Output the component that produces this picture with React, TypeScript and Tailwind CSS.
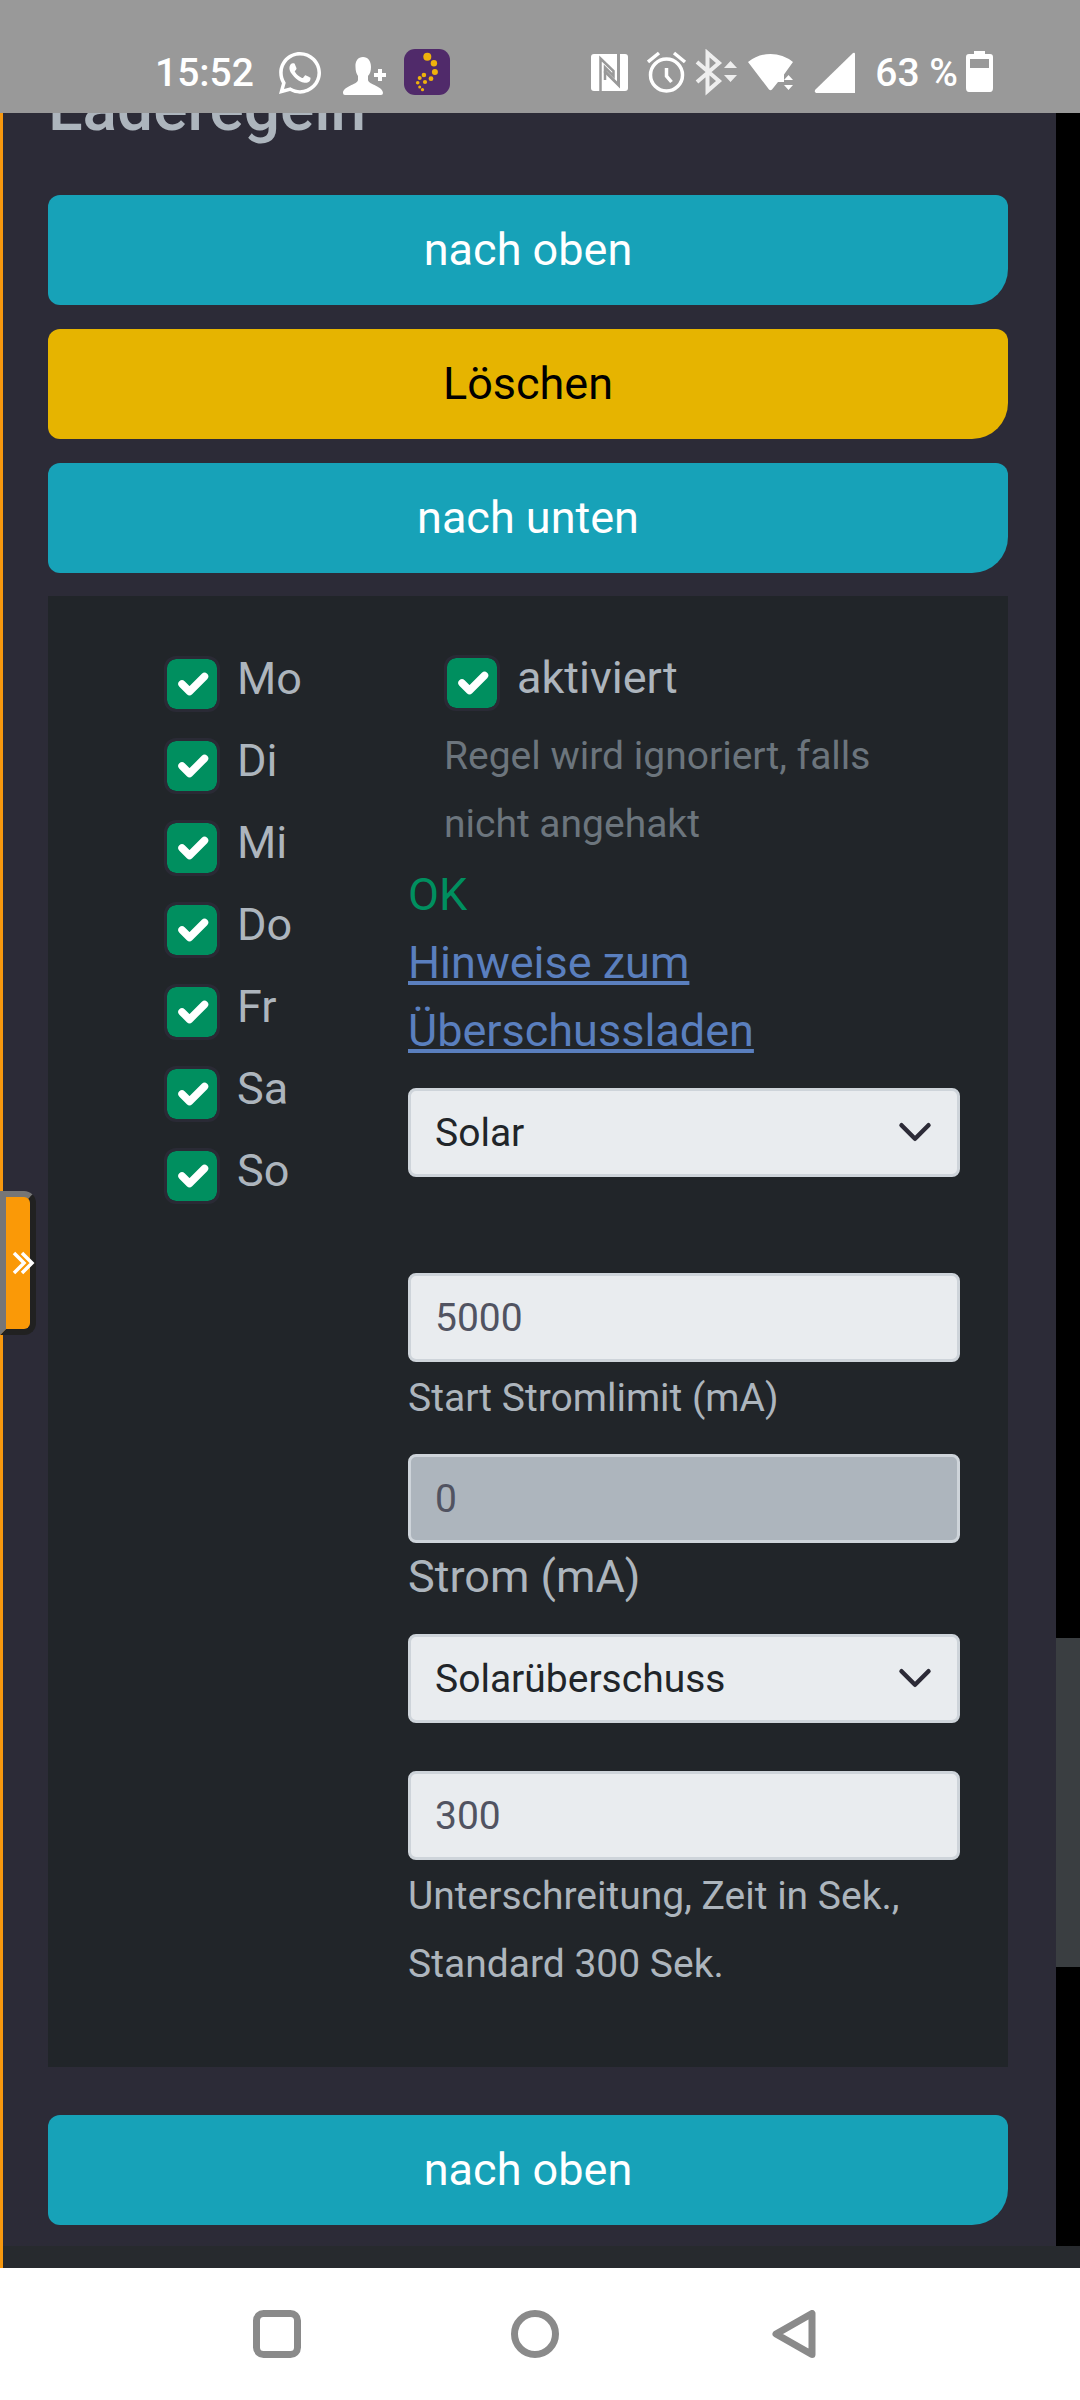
import { useState } from "react";
import { FaWhatsapp } from "react-icons/fa";

const DAYS = ["Mo", "Di", "Mi", "Do", "Fr", "Sa", "So"];

function StatusBar() {
  return (
    <header className="flex items-center justify-between bg-[#999999] pt-[49px] pb-4 pl-[155px] pr-[86px] text-[39px] leading-[48px] font-medium text-white">
      <div className="flex items-center gap-4">
        <span className="mr-[6px]">15:52</span>
        <FaWhatsapp className="h-12 w-12" />
        <svg className="h-12 w-12" viewBox="0 0 48 48" fill="currentColor">
          <path d="M23 8C18 8 15 12 15.500 18C15.500 22 16.500 25 18 27V31C17 36 3 37 3 44Q3 46 5 46H41Q43 46 43 44C43 37 29 36 28 31V27C30 25 31 22 31 18C31 12 28 8 23 8Z" />
          <path d="M38 20h4v4h4v4h-4v4h-4v-4h-4v-4h4z" />
        </svg>
        <svg className="h-12 w-[46px]" viewBox="0 0 46 48">
          <rect width="46" height="46" rx="11" fill="#502a6a" />
          <g fill="#efb20c">
            <circle cx="23.300" cy="7.700" r="4" />
            <circle cx="29.900" cy="14.300" r="3.200" />
            <circle cx="30.900" cy="23" r="3" />
            <circle cx="27" cy="29.700" r="2.400" />
            <circle cx="19.900" cy="26" r="2.300" />
            <circle cx="15.700" cy="29" r="2" />
            <circle cx="21" cy="33" r="2.100" />
            <circle cx="13.700" cy="33.700" r="1.800" />
            <circle cx="15.700" cy="38" r="1.500" />
            <circle cx="18.500" cy="40.700" r="1.600" />
          </g>
        </svg>
      </div>
      <div className="flex items-center gap-2">
        <svg className="h-12 w-12" viewBox="0 0 48 48" fill="none">
          <rect y="5" width="37" height="37" rx="3" fill="#fff" />
          <path d="M10 42V9L22 21V27L14 19V31L28 38V5" fill="none" />
          <path d="M9.500 42V9.500L22.500 22V27L14 18.500V31" stroke="#999999" strokeWidth="2.500" />
          <path d="M27.500 5V36L13.500 22" stroke="#999999" strokeWidth="3" />
        </svg>
        <svg className="h-12 w-10" viewBox="0 0 40 48" fill="none" stroke="#fff" strokeWidth="3.500">
          <circle cx="19.500" cy="26" r="16" />
          <path d="M19.500 19v8l5 6M1 13L12 4M38 13L27 4" />
        </svg>
        <svg className="h-12 w-[45px]" viewBox="0 0 45 48" fill="none">
          <path d="M2 13L24 32L12.500 42V4L24 14L2 33" stroke="#eee" strokeWidth="4" />
          <path d="M29 19L35.500 12L42 19ZM29 26H42L35.500 33Z" fill="#eee" />
        </svg>
        <svg className="h-12 w-[55px]" viewBox="0 0 55 48" fill="#fff">
          <path d="M0 13Q10 5 22.500 5T45 13L36 25.500V33L30 33L24 40.500Q22.500 42 21 40.500Z" />
          <path d="M36 31L40.500 26L45 31ZM36 36H45L40.500 41Z" />
        </svg>
        <svg className="h-12 w-14" viewBox="0 0 56 48" fill="#fff">
          <path d="M42 4Q44 3 44 5V44H5Q3 43 4 41Z" />
        </svg>
        <span>63 %</span>
        <svg className="h-12 w-7" viewBox="0 0 28 48" fill="#fff">
          <path fillRule="evenodd" d="M8 2H19V5H24Q27 5 27 8V39Q27 43 24 43H3Q0 43 0 39V8Q0 5 3 5H8ZM4 10V19H23V10Z" />
        </svg>
      </div>
    </header>
  );
}

function ActionButton({ children, warning }: { children: string; warning?: boolean }) {
  return (
    <button
      type="button"
      className={`block h-[110px] w-full rounded-xl rounded-br-[36px] text-[45px] leading-[68px] ${
        warning ? "bg-[#e6b400] text-black" : "bg-[#17a2b8] text-white"
      }`}
    >
      {children}
    </button>
  );
}

function Check({ label }: { label: string }) {
  const [on, setOn] = useState(true);
  return (
    <label className="flex gap-[17px]">
      <span className="relative mt-[11px] h-14 w-14 shrink-0">
        <input
          type="checkbox"
          checked={on}
          onChange={(e) => setOn(e.target.checked)}
          className="block h-14 w-14 appearance-none rounded-xl border-3 border-[#2a2a35] bg-[#e9ecef] bg-clip-padding checked:bg-[#008f5f]"
        />
        {on && (
          <svg className="pointer-events-none absolute inset-[3px]" viewBox="0 0 20 20" fill="none">
            <path d="m6 10 3 3 6-6" stroke="#fff" strokeWidth="3" strokeLinecap="round" strokeLinejoin="round" />
          </svg>
        )}
      </span>
      <span>{label}</span>
    </label>
  );
}

function SelectBox({ label, options }: { label: string; options: string[] }) {
  return (
    <div className="relative">
      <select
        aria-label={label}
        className="block h-[89px] w-full appearance-none rounded-lg border-3 border-[#ced4da] bg-[#e9ecef] px-6 text-[39px] text-[#212529]"
      >
        {options.map((o) => (
          <option key={o}>{o}</option>
        ))}
      </select>
      <svg className="pointer-events-none absolute top-[26px] right-[27px] h-9 w-9" viewBox="0 0 16 16" fill="none">
        <path d="m2 5 6 6 6-6" stroke="#2c2b37" strokeWidth="2" strokeLinecap="round" strokeLinejoin="round" />
      </svg>
    </div>
  );
}

const inputClass =
  "block h-[89px] w-full rounded-lg border-3 border-[#ced4da] bg-[#e9ecef] px-6 text-[39px] text-[#515361] disabled:bg-[#adb5bd]";

function RulePanel() {
  return (
    <section className="mt-[23px] grid grid-cols-[312px_1fr] bg-[#212529] p-12 text-[45px] leading-[68px]">
      <div className="flex flex-col gap-[14px] pt-px pl-[68px]">
        {DAYS.map((day) => (
          <Check key={day} label={day} />
        ))}
      </div>
      <div>
        <div className="mb-[3px] pl-9">
          <Check label="aktiviert" />
          <p className="mt-[10px] text-[39px] text-[#6c757d]">Regel wird ignoriert, falls nicht angehakt</p>
        </div>
        <p className="text-[#008f5f]">OK</p>
        <a href="#hinweise" className="mb-[23px] block text-[#5a7fbe] underline">
          Hinweise zum Überschussladen
        </a>
        <SelectBox label="Modus" options={["Solar", "Zeit"]} />
        <input id="start" className={`${inputClass} mt-24`} defaultValue="5000" />
        <label htmlFor="start" className="mt-[2px] mb-[22px] block text-[39px]">
          Start Stromlimit (mA)
        </label>
        <input id="strom" className={inputClass} defaultValue="0" disabled />
        <label htmlFor="strom" className="mb-[23px] block">
          Strom (mA)
        </label>
        <SelectBox label="Quelle" options={["Solarüberschuss", "Netz"]} />
        <input id="zeit" className={`${inputClass} mt-12`} defaultValue="300" />
        <label htmlFor="zeit" className="mt-[2px] mb-[21px] block text-[39px]">
          Unterschreitung, Zeit in Sek., Standard 300 Sek.
        </label>
      </div>
    </section>
  );
}

function NavBar() {
  return (
    <nav className="flex h-[132px] items-center bg-white pl-[253px] text-[#8a8a8a]">
      <button type="button" aria-label="Übersicht" className="mr-[210px]">
        <svg className="h-12 w-12" viewBox="0 0 48 48" fill="none" stroke="currentColor" strokeWidth="7">
          <rect x="3.500" y="3.500" width="41" height="41" rx="7" />
        </svg>
      </button>
      <button type="button" aria-label="Start" className="mr-[210px]">
        <svg className="h-12 w-12" viewBox="0 0 48 48" fill="none" stroke="currentColor" strokeWidth="7">
          <circle cx="24" cy="24" r="20.500" />
        </svg>
      </button>
      <button type="button" aria-label="Zurück">
        <svg className="h-12 w-12" viewBox="0 0 48 48" fill="none" stroke="currentColor" strokeWidth="7" strokeLinejoin="round">
          <path d="M43 3.500V44.500L7 24Z" />
        </svg>
      </button>
    </nav>
  );
}

export default function App() {
  return (
    <div className="flex min-h-screen flex-col bg-[#272a2e] font-[Roboto,sans-serif]">
      <StatusBar />
      <main className="relative grow border-l-3 border-[#f7980f] pb-[22px] text-[#adb5bd]">
        <div className="flex h-full">
          <div className="grow bg-[#2c2b37] pr-12 pb-[21px] pl-[45px]">
            {/* heading is scrolled half under the status bar */}
            <div className="flex h-[82px] flex-col overflow-hidden">
              <h1 className="-mt-[42px] text-[64px] leading-[76px] font-medium">Laderegeln</h1>
            </div>
            <div className="flex flex-col gap-6">
              <ActionButton>nach oben</ActionButton>
              <ActionButton warning>Löschen</ActionButton>
              <ActionButton>nach unten</ActionButton>
            </div>
            <RulePanel />
            <div className="mt-12">
              <ActionButton>nach oben</ActionButton>
            </div>
          </div>
          <div className="relative w-6 shrink-0 bg-black">
            <div className="absolute top-[71.5%] h-[15.4%] w-full bg-[#3a3e41]" />
          </div>
        </div>
        <button
          type="button"
          aria-label="Menü öffnen"
          className="absolute top-1/2 -left-[3px] h-36 w-9 rounded-r-xl border-6 border-t-[#767676] border-r-[#212121] border-b-[#212121] border-l-[#767676] bg-[#fa9907]"
        >
          <svg className="ml-[6px] h-6 w-6" viewBox="0 0 24 24" fill="none" stroke="#fff" strokeWidth="3.500">
            <path d="M2 2L12 12L2 22M10 2L20 12L10 22" />
          </svg>
        </button>
      </main>
      <NavBar />
    </div>
  );
}
